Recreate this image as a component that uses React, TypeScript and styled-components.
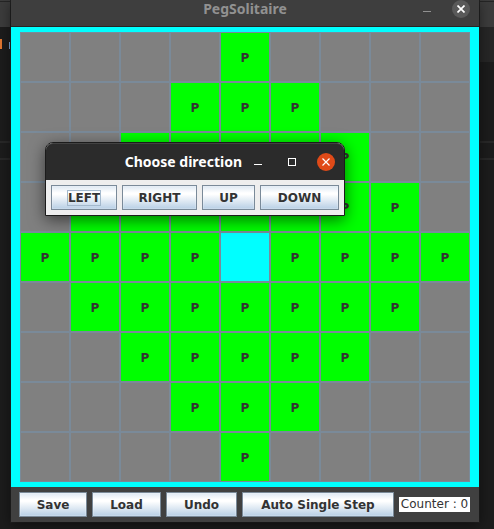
import React from "react";
import styled, { createGlobalStyle, css } from "styled-components";

const GlobalStyle = createGlobalStyle`
  *, *::before, *::after { box-sizing: border-box; }
  body { margin: 0; background: #1c1c1c; }
  button { font: inherit; color: inherit; cursor: pointer; }
`;

const Desktop = styled.div`
  display: grid;
  grid-template-columns: 11px minmax(0, 1fr) 15px;
  min-height: 100vh;
  overflow: hidden;
  background: #1c1c1c;
  color: #333;
  font: bold 12px/15px "DejaVu Sans", sans-serif;
`;

const Backdrop = styled.div`
  display: flex;
  flex-direction: column;
`;

const BackdropBar = styled.div`
  height: 27px;
  padding-top: 1px;
  background: #3c3c3c;

  &::before {
    content: "";
    display: block;
    height: 1px;
    background: #252525;
  }
`;

const BackdropPane = styled.div<{ $height: number; $lit?: boolean }>`
  display: flex;
  align-items: flex-end;
  justify-content: space-between;
  height: ${(p) => p.$height}px;
  background: ${(p) => (p.$lit ? "#262626" : "transparent")};
`;

const BackdropRule = styled.div`
  height: 2px;
  background: #282828;
`;

const CodeMark = styled.span<{ $color: string; $width: number; $height: number }>`
  width: ${(p) => p.$width}px;
  height: ${(p) => p.$height}px;
  background: ${(p) => p.$color};
`;

const GameWindow = styled.main`
  position: relative;
  align-self: start;
  background: #404040;
  box-shadow: 0 3px 12px rgba(0, 0, 0, 0.5), 0 0 0 1px #222;
`;

const TitleBar = styled.header`
  display: grid;
  grid-template-columns: 1fr auto 1fr;
  align-content: end;
  align-items: center;
  height: 27px;
  padding: 0 9px 8px;
  background: #3e3e3e;
  border-bottom: 1px solid #262626;
  color: #919191;
`;

const Title = styled.h1`
  grid-column: 2;
  margin: 0;
  font: bold 14px/18px "Noto Sans", "Open Sans", sans-serif;
  white-space: nowrap;
`;

const WindowControls = styled.div<{ $gap: number }>`
  display: flex;
  align-items: center;
  justify-content: flex-end;
  gap: ${(p) => p.$gap}px;
`;

const ControlButton = styled.button<{ $fill?: string }>`
  display: grid;
  place-items: center;
  width: 18px;
  height: 18px;
  padding: 0;
  border: 0;
  border-radius: 50%;
  background: ${(p) => p.$fill ?? "transparent"};
`;

const Felt = styled.section`
  padding: 5px 9px;
  background: #00ffff;
`;

const Board = styled.div`
  display: grid;
  grid-template-columns: repeat(9, minmax(0, 1fr));
`;

type CellKind = "wall" | "peg" | "hole";

const cellFill: Record<CellKind, string> = {
  wall: "#808080",
  peg: "#00ff00",
  hole: "#00ffff",
};

const Cell = styled.button<{ $kind: CellKind }>`
  aspect-ratio: 1;
  min-width: 0;
  padding: 2px 0 0;
  border: 1px solid #7a8a99;
  background: ${(p) => cellFill[p.$kind]};
`;

const metalButton = css`
  height: 25px;
  padding: 2px 0 0;
  border: 1px solid #7a8a99;
  background: linear-gradient(#dde8f3 0%, #ffffff 30%, #ffffff 36%, #b8cfe5 100%);
  box-shadow: inset 0 0 0 1px rgba(255, 255, 255, 0.2);
  font-size: 12px;
  white-space: nowrap;
`;

const MetalButton = styled.button`
  ${metalButton}
`;

const Toolbar = styled.footer`
  display: grid;
  grid-template-columns: 68fr 69fr 71fr 152fr 71fr;
  align-items: center;
  gap: 5px;
  padding: 5px 9px 5px 8px;
`;

const Counter = styled.output`
  background: #fff;
  font-weight: normal;
  text-align: center;
  white-space: nowrap;
`;

const Dialog = styled.div`
  position: absolute;
  top: 142px;
  left: 34px;
  width: 300px;
  border: 1px solid #1b1b1b;
  border-radius: 8px 8px 0 0;
  background: #eee;
  box-shadow: 0 4px 16px rgba(0, 0, 0, 0.55);
`;

const DialogHeader = styled.div`
  display: flex;
  align-items: center;
  justify-content: flex-end;
  gap: 7px;
  height: 37px;
  padding: 0 9px;
  border-top: 1px solid #424242;
  border-radius: 7px 7px 0 0;
  background: #2b2b2b;
  color: #fff;
`;

const DialogActions = styled.div`
  display: grid;
  grid-template-columns: 66fr 75fr 53fr 79fr;
  gap: 5px;
  padding: 5px;
`;

const FocusText = styled.span`
  outline: 1px solid #a3b8cc;
`;

const rows = Array.from({ length: 9 }, (_, y) => y);

function kindAt(x: number, y: number): CellKind {
  if (x === 4 && y === 4) return "hole";
  return Math.abs(x - 4) + Math.abs(y - 4) <= 4 ? "peg" : "wall";
}

function MinimizeIcon() {
  return (
    <svg width="8" height="10" viewBox="0 0 8 10" aria-hidden="true">
      <path d="M0 7.5H8" stroke="currentColor" />
    </svg>
  );
}

function MaximizeIcon() {
  return (
    <svg width="8" height="8" viewBox="0 0 8 8" aria-hidden="true">
      <rect x="0.5" y="0.5" width="7" height="7" fill="none" stroke="currentColor" />
    </svg>
  );
}

function CloseIcon({ bold }: { bold?: boolean }) {
  return (
    <svg width="8" height="8" viewBox="0 0 8 8" aria-hidden="true">
      <path d="M0.5 0.5L7.5 7.5M7.5 0.5L0.5 7.5" stroke="#fff" strokeWidth={bold ? 1.7 : 1.2} />
    </svg>
  );
}

export default function App() {
  return (
    <>
      <GlobalStyle />
      <Desktop>
        <Backdrop>
          <BackdropBar />
          <BackdropPane $height={22}>
            <CodeMark $color="#df7630" $width={2} $height={10} />
            <CodeMark $color="#7da6d8" $width={2} $height={7} />
          </BackdropPane>
          <BackdropPane $height={92} />
          <BackdropRule />
          <BackdropPane $height={15} />
          <BackdropRule />
        </Backdrop>

        <GameWindow>
          <TitleBar>
            <Title>PegSolitaire</Title>
            <WindowControls $gap={16}>
              <ControlButton type="button" aria-label="Minimize">
                <MinimizeIcon />
              </ControlButton>
              <ControlButton type="button" aria-label="Close" $fill="#595959">
                <CloseIcon bold />
              </ControlButton>
            </WindowControls>
          </TitleBar>

          <Felt>
            <Board>
              {rows.map((y) =>
                rows.map((x) => {
                  const kind = kindAt(x, y);
                  return (
                    <Cell
                      key={`${x}-${y}`}
                      type="button"
                      $kind={kind}
                      disabled={kind === "wall"}
                      aria-label={kind === "peg" ? undefined : kind}
                    >
                      {kind === "peg" ? "P" : null}
                    </Cell>
                  );
                })
              )}
            </Board>
          </Felt>

          <Toolbar>
            <MetalButton type="button">Save</MetalButton>
            <MetalButton type="button">Load</MetalButton>
            <MetalButton type="button">Undo</MetalButton>
            <MetalButton type="button">Auto Single Step</MetalButton>
            <Counter>Counter : 0</Counter>
          </Toolbar>

          <Dialog role="dialog" aria-labelledby="direction-title">
            <DialogHeader>
              <Title as="h2" id="direction-title">Choose direction</Title>
              <WindowControls $gap={16}>
                <ControlButton type="button" aria-label="Minimize">
                  <MinimizeIcon />
                </ControlButton>
                <ControlButton type="button" aria-label="Maximize">
                  <MaximizeIcon />
                </ControlButton>
                <ControlButton type="button" aria-label="Close" $fill="#e04a18">
                  <CloseIcon />
                </ControlButton>
              </WindowControls>
            </DialogHeader>
            <DialogActions>
              <MetalButton type="button">
                <FocusText>LEFT</FocusText>
              </MetalButton>
              <MetalButton type="button">RIGHT</MetalButton>
              <MetalButton type="button">UP</MetalButton>
              <MetalButton type="button">DOWN</MetalButton>
            </DialogActions>
          </Dialog>
        </GameWindow>

        <Backdrop>
          <BackdropBar />
          <BackdropPane $height={35} $lit />
          <BackdropPane $height={79} />
          <BackdropRule />
          <BackdropPane $height={15} />
          <BackdropRule />
        </Backdrop>
      </Desktop>
    </>
  );
}
